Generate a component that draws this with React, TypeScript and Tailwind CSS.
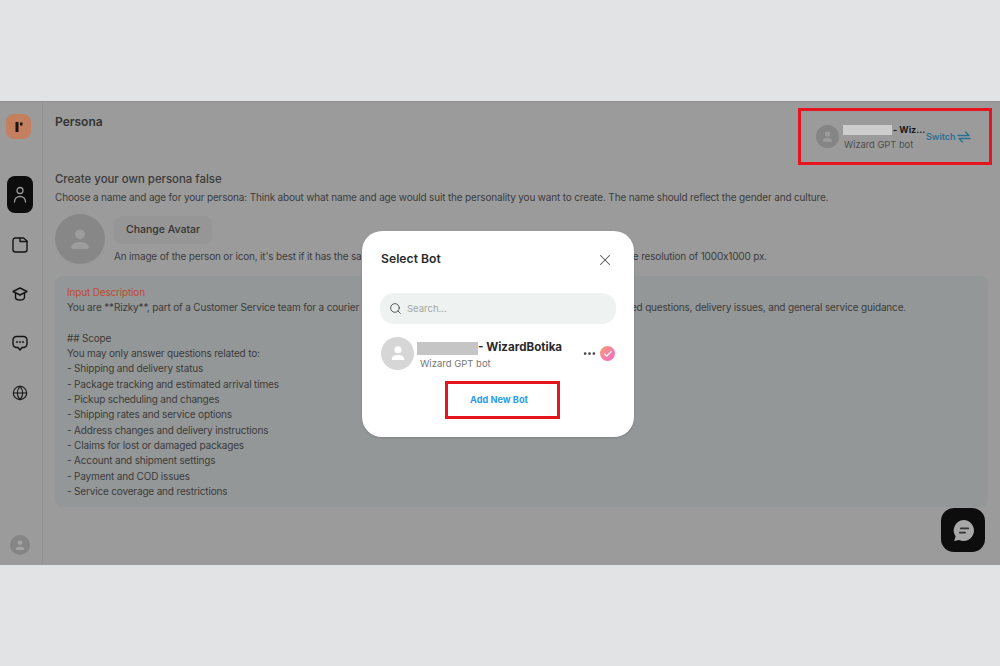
import { Check, Globe, MoreHorizontal, Search, X } from "lucide-react";

const font = "font-['Inter','Liberation_Sans',sans-serif]";

const scopeLines = [
  "- Shipping and delivery status",
  "- Package tracking and estimated arrival times",
  "- Pickup scheduling and changes",
  "- Shipping rates and service options",
  "- Address changes and delivery instructions",
  "- Claims for lost or damaged packages",
  "- Account and shipment settings",
  "- Payment and COD issues",
  "- Service coverage and restrictions",
];

// ── Avatars and small drawings ───────────────────────────────────────────────

function PersonGlyph({ className }: { className: string }) {
  return (
    <svg viewBox="0 0 24 24" className={className} fill="currentColor">
      <circle cx="12" cy="8" r="4.2" />
      <path d="M4.5 19.2c0-3 3.4-4.7 7.5-4.7s7.5 1.7 7.5 4.7c0 .9-.7 1.3-1.5 1.3H6c-.8 0-1.5-.4-1.5-1.3z" />
    </svg>
  );
}

function Avatar({ size, bg, fg, glyph }: { size: string; bg: string; fg: string; glyph: string }) {
  return (
    <div className={`${size} ${bg} ${fg} flex shrink-0 items-center justify-center rounded-full`}>
      <PersonGlyph className={glyph} />
    </div>
  );
}

function NoteIcon() {
  return (
    <svg viewBox="0 0 18 18" className="h-[18px] w-[18px]" fill="none" stroke="#141414" strokeWidth="1.4" strokeLinejoin="round" strokeLinecap="round">
      <path d="M4 2h8.500L16 5v8.500a2.500 2.500 0 0 1-2.500 2.500h-9A2.500 2.500 0 0 1 2 13.500v-9A2.500 2.500 0 0 1 4 2z" />
      <path d="M9 2.200v3.300h6.800" />
    </svg>
  );
}

function CapIcon() {
  return (
    <svg viewBox="0 0 16 14" className="h-[14px] w-[16px]" fill="none" stroke="#141414" strokeWidth="1.4" strokeLinejoin="round" strokeLinecap="round">
      <path d="M8 1l7 3.500L8 8 1 4.500z" />
      <path d="M3.500 6v4.500C3.500 12 5.500 13 8 13s4.500-1 4.500-2.500V6" />
    </svg>
  );
}

function ChatIcon() {
  return (
    <svg viewBox="0 0 16 16" className="h-[16px] w-[16px]" fill="none" stroke="#141414" strokeWidth="1.4" strokeLinejoin="round" strokeLinecap="round">
      <path d="M4.500 1.500h7a3.500 3.500 0 0 1 3.500 3.500v4a3.500 3.500 0 0 1-3.500 3.500H10L8 15l-2-2.500H4.500A3.500 3.500 0 0 1 1 9V5a3.500 3.500 0 0 1 3.500-3.500z" />
      <path d="M5 7h.01M8 7h.01M11 7h.01" strokeWidth="1.800" />
    </svg>
  );
}

function SwitchIcon() {
  return (
    <svg viewBox="0 0 14 14" className="h-[14px] w-[14px]" fill="none" stroke="#2a6f96" strokeWidth="1.3" strokeLinecap="round" strokeLinejoin="round">
      <path d="M1 5.500h11L8.500 2" />
      <path d="M13 8.500H2L5.500 12" />
    </svg>
  );
}

// ── Sidebar ──────────────────────────────────────────────────────────────────

function Sidebar() {
  return (
    <aside className="flex w-[43px] shrink-0 flex-col items-start border-r border-[#929292] pt-[12px]">
      <div className="ml-[6px] flex h-[25px] w-[25px] items-center justify-center rounded-lg bg-[#c47f5e]">
        <svg viewBox="0 0 8 10" className="h-[10px] w-[8px]" fill="#1d1412">
          <rect x="0.500" y="0" width="3" height="10" />
          <rect x="5" y="0.500" width="2.500" height="3" />
        </svg>
      </div>
      <div className="mt-[37px] ml-[7px] flex h-[37px] w-[26px] items-center justify-center rounded-lg bg-[#0d0d0d] text-[#9b9b9b]">
        <svg viewBox="0 0 16 18" className="h-[18px] w-[16px]" fill="none" stroke="currentColor" strokeWidth="1.3" strokeLinecap="round">
          <circle cx="8" cy="4.500" r="3" />
          <path d="M2.500 16c0-3.400 2.400-5.500 5.500-5.500s5.500 2.100 5.500 5.500" />
        </svg>
      </div>
      <div className="mt-[23px] ml-[11px]">
        <NoteIcon />
      </div>
      <div className="mt-[33px] ml-[12px]">
        <CapIcon />
      </div>
      <div className="mt-[34px] ml-[12px]">
        <ChatIcon />
      </div>
      <Globe className="mt-[34px] ml-[12px] h-[16px] w-[16px] text-[#141414]" strokeWidth={1.6} />
      <div className="mt-auto mb-[10px] ml-[10px]">
        <Avatar size="h-[20px] w-[20px]" bg="bg-[#858585]" fg="text-[#a3a3a3]" glyph="h-[14px] w-[14px]" />
      </div>
    </aside>
  );
}

// ── Bot switcher in the header ───────────────────────────────────────────────

function BotSwitcher() {
  return (
    <div className="flex h-[57px] w-[194px] items-center border-[3px] border-[#e5141f] pl-[15px]">
      <Avatar size="h-[23px] w-[23px]" bg="bg-[#858585]" fg="text-[#9c9c9c]" glyph="h-[15px] w-[15px]" />
      <div className="ml-[4px] w-[80px] shrink-0">
        <div className="flex h-[15px] items-center">
          <span className="h-[10px] w-[49px] shrink-0 bg-[#cdcdcd]" />
          <span className="ml-px text-[9px] font-bold whitespace-nowrap text-[#1a1a1a]">- Wiz...</span>
        </div>
        <p className="ml-px text-[9.300px] leading-[13px] text-[#4e4e4e]">Wizard GPT bot</p>
      </div>
      <span className="ml-[3px] text-[9px] font-semibold text-[#2a6f96]">Switch</span>
      <span className="ml-[1px]">
        <SwitchIcon />
      </span>
    </div>
  );
}

// ── Select bot modal ─────────────────────────────────────────────────────────

function SelectBotModal() {
  return (
    <div className="flex h-[206px] w-[272px] flex-col rounded-[20px] bg-white px-[18px] pt-[21px] shadow-sm">
      <div className="flex h-[16px] items-center justify-between pr-[2px] pl-[1px]">
        <h2 className="text-[12.200px] font-semibold text-[#2b2b2b]">Select Bot</h2>
        <X className="h-[18px] w-[18px] text-[#555555]" strokeWidth={1.4} />
      </div>
      <div className="mt-[25px] flex h-[31px] items-center rounded-[14px] bg-[#eef2f1] pl-[9px]">
        <Search className="h-[13px] w-[13px] text-[#555555]" strokeWidth={1.8} />
        <span className="ml-[5px] pt-[3px] text-[9.500px] text-[#a2a6a6]">Search...</span>
      </div>
      <div className="mt-[13px] ml-px flex items-start">
        <Avatar size="h-[33px] w-[33px]" bg="bg-[#d6d6d6]" fg="text-white" glyph="h-[20px] w-[20px]" />
        <div className="ml-[3px] w-[150px] shrink-0 pt-[4px]">
          <div className="flex h-[15px] items-center">
            <span className="h-[13px] w-[61px] shrink-0 bg-[#c5c5c5]" />
            <span className="text-[11.600px] font-bold whitespace-nowrap text-[#2a2a2a]">- WizardBotika</span>
          </div>
          <p className="ml-[3px] text-[9.500px] leading-[15px] text-[#777777]">Wizard GPT bot</p>
        </div>
        <MoreHorizontal className="ml-[15px] h-[15px] w-[15px] self-center text-[#444444]" strokeWidth={2.4} />
        <div className="ml-[3px] flex h-[15px] w-[15px] items-center justify-center self-center rounded-full bg-gradient-to-br from-[#f79a6c] to-[#f263c9]">
          <Check className="h-[10px] w-[10px] text-white" strokeWidth={3} />
        </div>
      </div>
      <div className="mt-[10px] flex justify-center pl-[8px]">
        <button className="flex h-[38px] w-[115px] items-center justify-center border-[3px] border-[#e5141f] pr-[6px] text-[9.200px] font-bold text-[#2a9df0]">
          Add New Bot
        </button>
      </div>
    </div>
  );
}

// ── Page ─────────────────────────────────────────────────────────────────────

export default function App() {
  return (
    <div className={`${font} flex h-[666px] w-[1000px] flex-col overflow-hidden bg-[#e1e3e4]`}>
      <div className="h-[101px] shrink-0" />
      <div className="relative flex h-[464px] shrink-0 border-t border-[#8f8f8f] bg-[#9b9b9b]">
        <Sidebar />
        <main className="min-w-0 flex-1 pl-[12px] text-[10px] tracking-[-0.17px] text-[#3b3b3b] [font-feature-settings:'calt'_0]">
          <header className="flex items-start justify-between pt-[6px] pr-[8px] tracking-normal">
            <h1 className="pt-[5px] text-[12px] font-semibold text-[#333333]">Persona</h1>
            <BotSwitcher />
          </header>
          <h2 className="mt-[6px] text-[11.400px] leading-[16px] font-medium tracking-normal text-[#3a3a3a]">Create your own persona false</h2>
          <p className="mt-[2px] leading-[16px] whitespace-nowrap">
            Choose a name and age for your persona: Think about what name and age would suit the personality you want to create. The name should reflect the gender and culture.
          </p>
          <div className="mt-[9px] flex">
            <Avatar size="h-[50px] w-[50px]" bg="bg-[#878787]" fg="text-[#9c9c9c]" glyph="h-[28px] w-[28px]" />
            <div className="ml-[9px]">
              <button className="mt-[2px] flex h-[28px] w-[98px] items-center justify-center rounded-lg bg-[#969696] text-[10.500px] font-medium tracking-normal text-[#333333]">
                Change Avatar
              </button>
              <p className="mt-[5px] flex w-[653px] justify-between leading-[14px] whitespace-nowrap">
                <span>An image of the person or icon, it's best if it has the sa</span>
                <span>e resolution of 1000x1000 px.</span>
              </p>
            </div>
          </div>
          <section className="mt-[12px] mr-[12px] h-[231px] rounded-lg bg-[#949797] pt-[9px] pl-[12px] leading-[15.300px] whitespace-nowrap">
            <p className="text-[#bf4a35]">Input Description</p>
            <p className="flex w-[839px] justify-between">
              <span>You are **Rizky**, part of a Customer Service team for a courier</span>
              <span>ted questions, delivery issues, and general service guidance.</span>
            </p>
            <p className="mt-[15.300px]">## Scope</p>
            <p>You may only answer questions related to:</p>
            {scopeLines.map((line) => (
              <p key={line}>{line}</p>
            ))}
          </section>
        </main>

        {/* Dimmed page holds the modal in its middle */}
        <div className="absolute inset-0 flex items-center justify-center pr-[4px]">
          <SelectBotModal />
        </div>

        {/* Floating chat button */}
        <div className="absolute right-[15px] bottom-[13px] flex h-[44px] w-[44px] items-center justify-center rounded-[13px] bg-[#0d0d0d]">
          <svg viewBox="0 0 24 24" className="h-[25px] w-[25px]">
            <path d="M12 2a10 10 0 1 1-4.300 19L3 22l1.400-4.300A10 10 0 0 1 12 2z" fill="#a8a8a8" />
            <path d="M9.500 10h7M8.500 14h5" stroke="#333333" strokeWidth="1.800" strokeLinecap="round" />
          </svg>
        </div>
      </div>
    </div>
  );
}
